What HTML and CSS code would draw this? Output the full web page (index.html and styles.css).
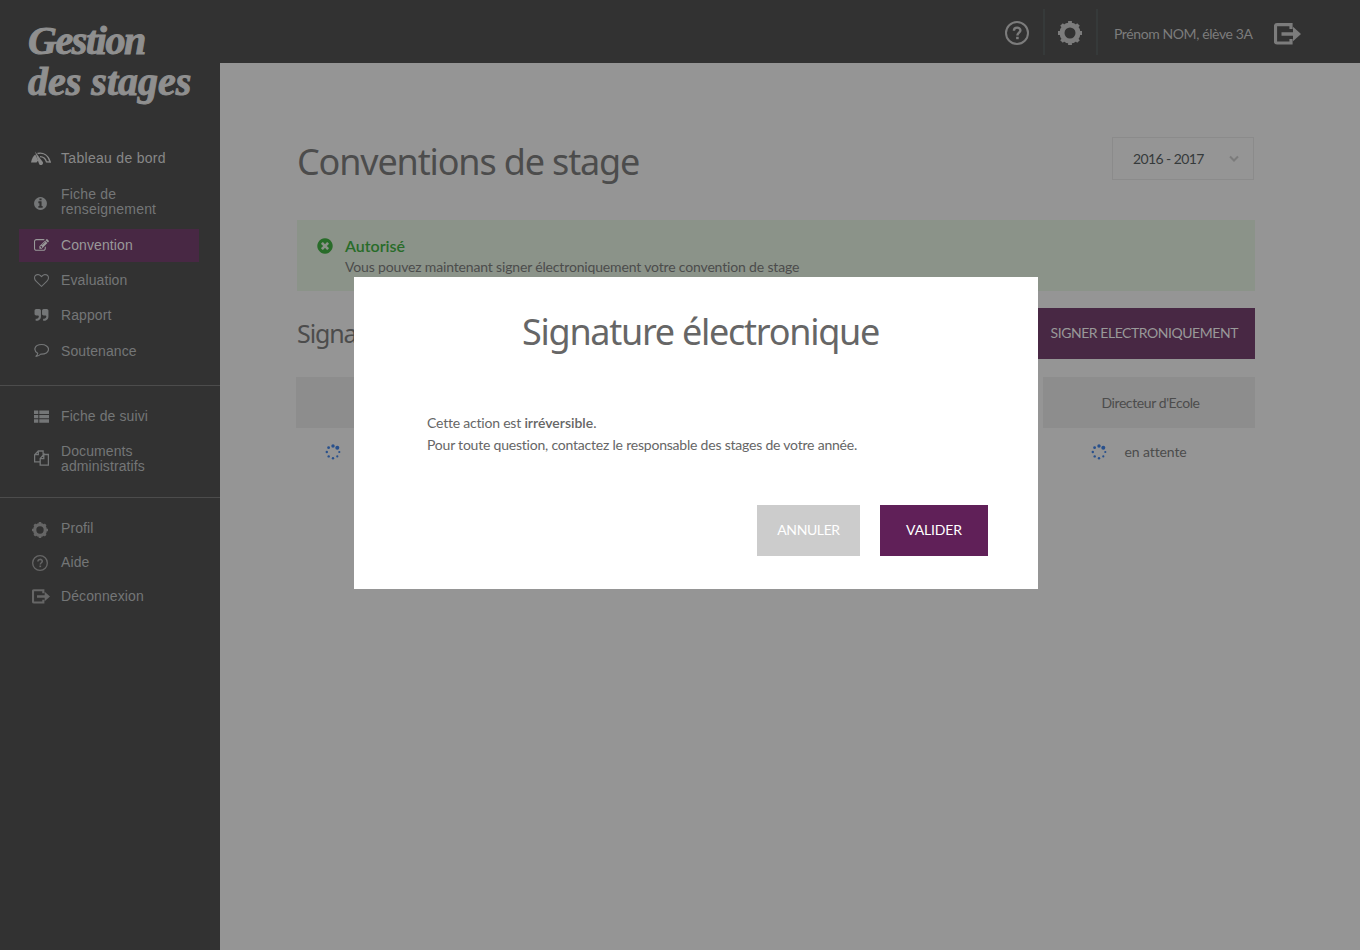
FILE: index.html
```
<!DOCTYPE html>
<html lang="fr">
<head>
<meta charset="utf-8">
<title>Gestion des stages</title>
<link rel="stylesheet" href="styles.css">
</head>
<body>
<svg class="defs" width="0" height="0">
  <symbol id="help" viewBox="0 0 24 24"><circle cx="12" cy="12" r="11" fill="none" stroke="currentColor" stroke-width="2"/><path d="M8.900 9.800c0-4.300 6.500-4 6.500-.4 0 2.300-3 2.200-3 5" fill="none" stroke="currentColor" stroke-width="2.400"/><rect x="11.100" y="15.800" width="2.600" height="2.400" fill="currentColor"/></symbol>
  <symbol id="gear" viewBox="0 0 24 24"><g fill="none" stroke="currentColor"><circle cx="12" cy="12" r="8" stroke-width="5"/><path d="M12 0v3M12 21v3M0 12h3M21 12h3M3.500 3.500l2.200 2.200M18.300 18.300l2.200 2.200M3.500 20.500l2.200-2.200M18.300 5.700l2.200-2.200" stroke-width="3.800"/></g></symbol>
  <symbol id="exit" viewBox="0 0 27 22"><path d="M17 6V1.700H3Q1.500 1.700 1.500 3.200V18.500Q1.500 20 3 20H17V16" fill="none" stroke="currentColor" stroke-width="3.200"/><path d="M7.500 9.300H19V3.800L27 11l-8 7.200V12.700H7.500z" fill="currentColor"/></symbol>
  <symbol id="spinner" viewBox="0 0 16 16"><g fill="#28508c"><circle cx="8" cy="2" r="1.700"/><circle cx="12.300" cy="3.700" r="2"/><circle cx="14.300" cy="8" r="1.100"/><circle cx="12.300" cy="12.400" r="1.100"/><circle cx="8" cy="14.200" r="1.200"/><circle cx="3.700" cy="12.400" r="1.200"/><circle cx="1.800" cy="8" r="1.200"/><circle cx="3.600" cy="3.700" r="1.400"/></g></symbol>
</svg>
<div class="app">
  <aside class="sidebar">
    <h1 class="logo"><span class="logo-a">Gestion</span><span class="logo-b">des stages</span></h1>
    <nav class="group">
      <a class="item strong"><svg width="20" height="16" viewBox="0 0 20 16"><path d="M0 12.500C.8 8.500 2.300 6 4.300 4.500L7.200 10.500 5.500 12.500z" fill="currentColor"/><path d="M4 1.500l7.200 9.800a2.100 2.100 0 1 1-3.300 2.200z" fill="currentColor"/><path d="M6.500 3.500c6-1.300 10.800 2 12.700 8.500l-3.700-.1C14.600 8.700 12.500 6.700 9 6.600" fill="none" stroke="currentColor" stroke-width="1.400"/></svg><span>Tableau de bord</span></a>
      <a class="item two low"><svg width="15" height="15" viewBox="0 0 1792 1792"><path fill="currentColor" d="M1152 1376v-160q0-14-9-23t-23-9h-96v-512q0-14-9-23t-23-9h-320q-14 0-23 9t-9 23v160q0 14 9 23t23 9h96v320h-96q-14 0-23 9t-9 23v160q0 14 9 23t23 9h448q14 0 23-9t9-23zm-128-896v-160q0-14-9-23t-23-9h-192q-14 0-23 9t-9 23v160q0 14 9 23t23 9h192q14 0 23-9t9-23zm640 416q0 209-103 385.500t-279.500 279.500-385.500 103-385.500-103-279.500-279.500-103-385.500 103-385.500 279.500-279.500 385.500-103 385.500 103 279.500 279.500 103 385.500z"/></svg><span>Fiche de<br>renseignement</span></a>
      <a class="item active"><svg width="15" height="15" viewBox="0 0 1792 1792"><path fill="currentColor" d="M888 1184l116-116-152-152-116 116v56h96v96h56zm440-720q-16-16-33 1l-350 350q-17 17-1 33t33-1l350-350q17-17 1-33zm80 594v190q0 119-84.500 203.500t-203.500 84.500h-832q-119 0-203.500-84.500t-84.500-203.500v-832q0-119 84.500-203.500t203.500-84.500h832q63 0 117 25 15 7 18 23 3 17-9 29l-49 49q-14 14-32 8-23-6-45-6h-832q-66 0-113 47t-47 113v832q0 66 47 113t113 47h832q66 0 113-47t47-113v-126q0-13 9-22l64-64q15-15 35-7t20 29zm-96-738l288 288-672 672h-288v-288zm444 132l-92 92-288-288 92-92q28-28 68-28t68 28l152 152q28 28 28 68t-28 68z"/></svg><span>Convention</span></a>
      <a class="item"><svg width="15" height="15" viewBox="0 0 1792 1792"><path fill="currentColor" d="M1664 596q0-81-21.500-143t-55-98.500-81.500-59.500-94-31-98-8-112 25.500-110.500 64-86.500 72-60 61.500q-18 22-49 22t-49-22q-24-28-60-61.500t-86.500-72-110.500-64-112-25.500-98 8-94 31-81.500 59.500-55 98.500-21.500 143q0 168 187 355l581 560 580-559q188-188 188-356zm128 0q0 221-229 450l-623 600q-18 18-44 18t-44-18l-624-602q-10-8-27.500-26t-55.500-65.500-68-97.500-53.500-121-23.500-138q0-220 127-344t351-124q62 0 126.500 21.500t120 58 95.500 68.500 76 68q36-36 76-68t95.500-68.500 120-58 126.500-21.500q224 0 351 124t127 344z"/></svg><span>Evaluation</span></a>
      <a class="item"><svg width="15" height="15" viewBox="0 0 1792 1792"><path id="q" fill="currentColor" d="M832 320v704q0 104-40.500 198.500t-109.500 163.500-163.500 109.500-198.500 40.500h-64q-26 0-45-19t-19-45v-128q0-26 19-45t45-19h64q106 0 181-75t75-181v-32q0-40-28-68t-68-28h-224q-80 0-136-56t-56-136v-384q0-80 56-136t136-56h384q80 0 136 56t56 136z"/><use href="#q" x="896"/></svg><span>Rapport</span></a>
      <a class="item talk"><svg width="15" height="15" viewBox="0 0 15 15"><path d="M3.700 10.300C-1 7.500.3 1.500 7.500 1.500c4 0 7 2.100 7 4.800 0 3.100-3.200 5-7.700 4.800-1.300 1.300-2.800 2-4.800 2.200 1-.8 1.600-1.700 1.700-3z" fill="none" stroke="currentColor" stroke-width="1.200" stroke-linejoin="round"/></svg><span>Soutenance</span></a>
    </nav>
    <nav class="group docs">
      <a class="item"><svg width="15" height="13" viewBox="0 0 15 13"><path fill="currentColor" d="M0 .5h4.300v3.400H0zM5.300.5H15v3.400H5.300zM0 4.900h4.300v3.400H0zM5.300 4.900H15v3.400H5.300zM0 9.300h4.300v3.400H0zM5.300 9.300H15v3.400H5.300z"/></svg><span>Fiche de suivi</span></a>
      <a class="item two"><svg width="15" height="16" viewBox="0 0 15 16"><path d="M5.700 11.900H.6V4.700L4.300 1h4.800v3.500M4.300 1v3.700H.6M9.800 4.500h4.600v10.700H6.200V8.400l3.600-3.900v4.100H6.200" fill="none" stroke="currentColor" stroke-width="1.300"/></svg><span>Documents<br>administratifs</span></a>
    </nav>
    <nav class="group account">
      <a class="item"><svg width="16" height="16"><use href="#gear"/></svg><span>Profil</span></a>
      <a class="item aide"><svg width="16" height="16"><use href="#help"/></svg><span>Aide</span></a>
      <a class="item leave"><svg width="18" height="15"><use href="#exit"/></svg><span>Déconnexion</span></a>
    </nav>
  </aside>
  <div class="page">
    <header class="topbar">
      <a class="tool"><svg width="24" height="24"><use href="#help"/></svg></a>
      <a class="tool"><svg width="24" height="24"><use href="#gear"/></svg></a>
      <span class="user">Prénom NOM, élève 3A</span>
      <svg class="logout" width="27" height="22"><use href="#exit"/></svg>
    </header>
    <main class="content">
      <div class="heading">
        <h2 class="title">Conventions de stage</h2>
        <div class="select"><span>2016 - 2017</span><svg width="10" height="8" viewBox="0 0 10 8"><path d="M1 1.500l4 4 4-4" fill="none" stroke="currentColor" stroke-width="2"/></svg></div>
      </div>
      <section class="alert">
        <svg width="18" height="18" viewBox="0 0 1792 1792"><path fill="currentColor" d="M1277 1122q0-26-19-45l-181-181 181-181q19-19 19-45 0-27-19-46l-90-90q-19-19-46-19-26 0-45 19l-181 181-181-181q-19-19-45-19-27 0-46 19l-90 90q-19 19-19 46 0 26 19 45l181 181-181 181q-19 19-19 45 0 27 19 46l90 90q19 19 46 19 26 0 45-19l181-181 181 181q19 19 45 19 27 0 46-19l90-90q19-19 19-46zm387-226q0 209-103 385.500t-279.500 279.500-385.500 103-385.500-103-279.500-279.500-103-385.500 103-385.500 279.500-279.500 385.500-103 385.500 103 279.500 279.500 103 385.500z"/></svg>
        <div><h3 class="alert-title">Autorisé</h3><p class="alert-text">Vous pouvez maintenant signer électroniquement votre convention de stage</p></div>
      </section>
      <div class="sign-row"><h3 class="subtitle">Signatures</h3><button class="sign">SIGNER ELECTRONIQUEMENT</button></div>
      <div class="signers">
        <div class="signer"><div class="role"></div><div class="state"><svg width="16" height="16"><use href="#spinner"/></svg></div></div>
        <div class="signer last"><div class="role">Directeur d'Ecole</div><div class="state"><svg width="16" height="16"><use href="#spinner"/></svg><span>en attente</span></div></div>
      </div>
    </main>
  </div>
  <section class="modal">
    <h2 class="modal-title">Signature électronique</h2>
    <p class="message"><span class="line1">Cette action est <b>irréversible</b>.</span><br><span class="line2">Pour toute question, contactez le responsable des stages de votre année.</span></p>
    <div class="actions"><button class="cancel">ANNULER</button><button class="ok">VALIDER</button></div>
  </section>
</div>
</body>
</html>
```
FILE: styles.css
```
* { box-sizing: border-box; }
body, h1, h2, h3, p { margin: 0; font-weight: 400; }
body { font-family: Lato, sans-serif; font-size: 14px; font-variant-ligatures: none; color: #4c4c4c; background: #959595; }
button { border: 0; padding: 0; font: inherit; white-space: nowrap; }
svg { display: block; flex: none; }
.defs { position: absolute; }
.app { position: relative; display: flex; width: 1360px; height: 950px; overflow: hidden; }

.sidebar { width: 220px; background: #323232; color: #747677; font-family: "Liberation Sans", Arial, sans-serif; }
.logo { display: flex; flex-direction: column; height: 140px; padding: 20px 0 0 28px; font: italic bold 40px/41px "Liberation Serif", serif; color: #8f8f8f; white-space: nowrap; -webkit-text-stroke: 1px #8f8f8f; }
.logo-a { letter-spacing: -1.400px; }
.logo-b { letter-spacing: 0; }
.group { padding-left: 19px; }
.item { display: grid; grid-template-columns: 42px 1fr; align-items: center; width: 180px; height: 35.500px; line-height: 15px; letter-spacing: .1px; padding-top: 1px; }
.item svg { justify-self: center; margin-left: 2px; }
.strong { height: 36px; color: #888; letter-spacing: .3px; padding-top: 0; }
.two { height: 53px; padding-bottom: 1px; padding-top: 0; }
.low { letter-spacing: .2px; }
.low svg { margin-top: 3px; margin-left: 0; }
.active { height: 33px; background: #482844; color: #999; padding-top: 0; }
.talk svg { margin-bottom: 1px; }
.docs { margin-top: 16px; padding-top: 12px; border-top: 1px solid #4c4c4c; height: 112px; }
.docs .item { height: 36px; padding-top: 2px; }
.docs .two { height: 49px; padding-bottom: 0; }
.docs .two svg { margin-bottom: 3px; }
.account { padding-top: 13px; border-top: 1px solid #4c4c4c; }
.account .item { height: 34px; padding-top: 2px; }
.account svg { color: #666; margin-top: 2px; margin-left: 0; }
.account .leave svg { margin-left: 2px; margin-top: 0; }
.account .aide svg { margin-top: 0; }

.page { flex: 1; }
.topbar { display: flex; align-items: center; height: 63px; padding: 0 59px 0 772px; background: #323232; color: #7c7c7c; }
.tool { display: grid; place-items: center; width: 53px; height: 46px; padding: 3px 1px 0 0; border-right: 2px solid #363a3a; }
.user { width: 159px; padding: 4px 0 0 16px; white-space: nowrap; letter-spacing: -.4px; }
.logout { margin-left: 17px; margin-top: 4px; }
.content { width: 958px; margin-left: 77px; padding-top: 74px; }
.heading { display: flex; justify-content: space-between; height: 83px; }
.title { font: 36px/49px "Noto Sans", sans-serif; letter-spacing: -1.150px; white-space: nowrap; }
.select { display: flex; align-items: center; justify-content: space-between; width: 142px; height: 43px; padding: 0 14px 0 20px; border: 1px solid #8b8b8b; color: #353a3b; margin-right: 1px; letter-spacing: -.6px; }
.select svg { color: #7b7b7b; }
.alert { display: flex; gap: 11px; height: 71px; padding: 16px 0 0 19px; background: #8b9389; }
.alert svg { color: #286c29; margin-top: 1px; margin-left: -.5px; margin-right: .5px; }
.alert-title { font-size: 16px; line-height: 20px; padding-bottom: 1px; color: #286c29; font-weight: 600; }
.alert-text { line-height: 20px; letter-spacing: -.160px; }
.sign-row { display: flex; justify-content: space-between; height: 86px; padding-top: 17px; }
.subtitle { font: 25px/50px "Noto Sans", sans-serif; letter-spacing: -1.100px; }
.sign { width: 240px; height: 51px; padding: 0 17px 2px 0; text-align: right; background: #482844; color: #999; letter-spacing: -.45px; }
.signers { display: flex; justify-content: space-between; margin-left: -1px; }
.signer { width: 212px; }
.role { display: flex; align-items: center; justify-content: center; height: 51px; background: #8d8d8d; letter-spacing: -.4px; }
.last .role { padding-left: 3px; }
.state { display: flex; align-items: center; gap: 18px; height: 47px; padding-left: 28.500px; letter-spacing: -.1px; }
.last .state { padding-left: 47.500px; }

.modal { position: absolute; left: 354px; top: 277px; width: 684px; height: 312px; background: #fff; color: #666; }
.modal-title { padding: 31px 0 0 168px; font: 36px/48px "Noto Sans", sans-serif; letter-spacing: -1.270px; white-space: nowrap; }
.message { padding: 56px 0 0 73px; line-height: 22px; white-space: nowrap; letter-spacing: -.21px; }
.message b { font-weight: 600; letter-spacing: 0; }
.actions { display: flex; justify-content: flex-end; gap: 20px; padding: 49px 50px 0 0; }
.cancel, .ok { height: 51px; padding-bottom: 2px; color: #fff; }
.cancel { width: 103px; background: #ccc; letter-spacing: -.4px; }
.ok { width: 108px; background: #602058; letter-spacing: -.15px; }
```
